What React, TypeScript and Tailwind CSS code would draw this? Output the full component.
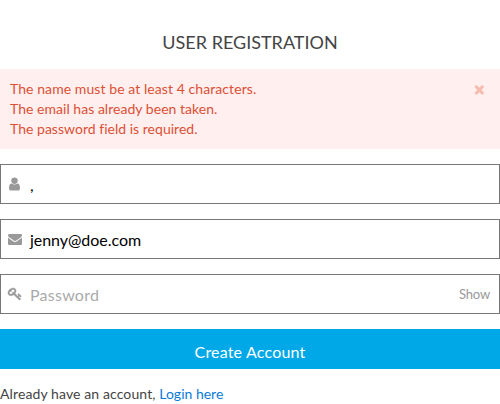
import React from 'react';

const errors = [
  { text: 'The name must be at least 4 characters.', spacing: 'tracking-[0.075px]' },
  { text: 'The email has already been taken.', spacing: 'tracking-[0.03px]' },
  { text: 'The password field is required.', spacing: 'tracking-[0.02px]' },
];

const paths = {
  user: 'M1536 1399q0 109-62.5 187t-150.5 78h-854q-88 0-150.5-78t-62.5-187q0-85 8.5-160.5t31.5-152 58.5-131 94-89 134.5-34.5q131 128 313 128t313-128q76 0 134.5 34.5t94 89 58.5 131 31.5 152 8.5 160.5zm-256-887q0 159-112.5 271.5t-271.5 112.5-271.5-112.5-112.5-271.5 112.5-271.5 271.5-112.5 271.5 112.5 112.5 271.5z',
  envelope: 'M1792 710v794q0 66-47 113t-113 47h-1472q-66 0-113-47t-47-113v-794q44 49 101 87 362 246 497 345 57 42 92.5 65.5t94.5 48 110 24.5h2q51 0 110-24.5t94.5-48 92.5-65.5q170-123 498-345 57-39 100-87zm0-294q0 79-49 151t-122 123q-376 261-468 325-10 7-42.5 31t-54 38.5-52 32.5-57.5 27-50 9h-2q-23 0-50-9t-57.5-27-52-32.5-54-38.5-42.5-31q-91-64-262-182.5t-205-142.5q-62-42-117-115.5t-55-136.5q0-78 41.5-130t118.5-52h1472q65 0 112.5 47t47.5 113z',
  key: 'M832 512q0-80-56-136t-136-56-136 56-56 136q0 42 19 83-41-19-83-19-80 0-136 56t-56 136 56 136 136 56 136-56 56-136q0-42-19-83 41 19 83 19 80 0 136-56t56-136zm851 704q0 17-49 66t-66 49q-9 0-28.5-16t-36.5-33-38.5-40-24.5-26l-96 96 220 220q28 28 28 68 0 42-39 81t-81 39q-40 0-68-28l-671-671q-176 131-365 131-163 0-265.5-102.5t-102.5-265.5q0-160 95-313t248-248 313-95q163 0 265.5 102.5t102.5 265.5q0 189-131 365l355 355 96-96q-3-3-26-24.5t-40-38.5-33-36.5-16-28.5q0-17 49-66t66-49q13 0 23 10 6 6 46 44.5t82 79.5 86.5 86 73 78 28.5 41z',
  times: 'M1490 1322q0 40-28 68l-136 136q-28 28-68 28t-68-28l-294-294-294 294q-28 28-68 28t-68-28l-136-136q-28-28-28-68t28-68l294-294-294-294q-28-28-28-68t28-68l136-136q28-28 68-28t68 28l294 294 294-294q28-28 68-28t68 28l136 136q28 28 28 68t-28 68l-294 294 294 294q28 28 28 68z',
};

function Icon({ name, viewBox = '0 0 1792 1792', stroke = 0 }: { name: keyof typeof paths; viewBox?: string; stroke?: number }) {
  return (
    <svg viewBox={viewBox} preserveAspectRatio="none" className="size-[14px] shrink-0 overflow-visible" fill="currentColor" stroke="currentColor" strokeWidth={stroke} aria-hidden="true">
      <path d={paths[name]} />
    </svg>
  );
}

const field = 'flex h-10 items-center border border-[#777] bg-white pl-[7px] pr-[9px] text-[#999]';

export default function App() {
  return (
    <main className="h-[404px] w-[500px] overflow-hidden bg-white font-['Lato',sans-serif] text-[#444]">
      <h1 className="pt-[29px] text-center text-[18px] leading-[26px]">USER REGISTRATION</h1>
      <div className="mt-[14px] flex h-20 justify-between bg-[#fff0ef] px-[10px] py-[10px] text-[14px] leading-5 text-[#dd4f35]">
        <ul>
          {errors.map((e) => <li key={e.text} className={e.spacing}>{e.text}</li>)}
        </ul>
        <button className="mr-[4px] flex h-5 items-center text-[#f5bdb0]"><Icon name="times" viewBox="-44 0 1792 1700" /></button>
      </div>
      <form className="mt-[15px] flex flex-col gap-[15px]">
        <div className={field}>
          <Icon name="user" viewBox="140 81 1630 1630" />
          <span className="ml-2 pt-px text-[16px] text-black">,</span>
        </div>
        <div className={field}>
          <Icon name="envelope" />
          <span className="ml-2 pt-[2px] text-[16px] tracking-[-0.04px] text-black">jenny@doe.com</span>
        </div>
        <div className={field}>
          <Icon name="key" viewBox="10 0 1760 1860" stroke={50} />
          <span className="ml-2 flex-1 pt-[2px] text-[16px] tracking-[0.25px] text-[#aaa]">Password</span>
          <span className="pt-px text-[13px] tracking-[-0.15px] text-[#999]">Show</span>
        </div>
        <button type="button" className="h-10 bg-[#00a8e8] pt-[6px] text-[16px] tracking-[0.18px] text-white">Create Account</button>
      </form>
      <p className="mt-[15px] text-[14px] leading-5 tracking-[0.11px]">Already have an account, <a className="tracking-normal text-[#0a7cd8]">Login here</a></p>
    </main>
  );
}
